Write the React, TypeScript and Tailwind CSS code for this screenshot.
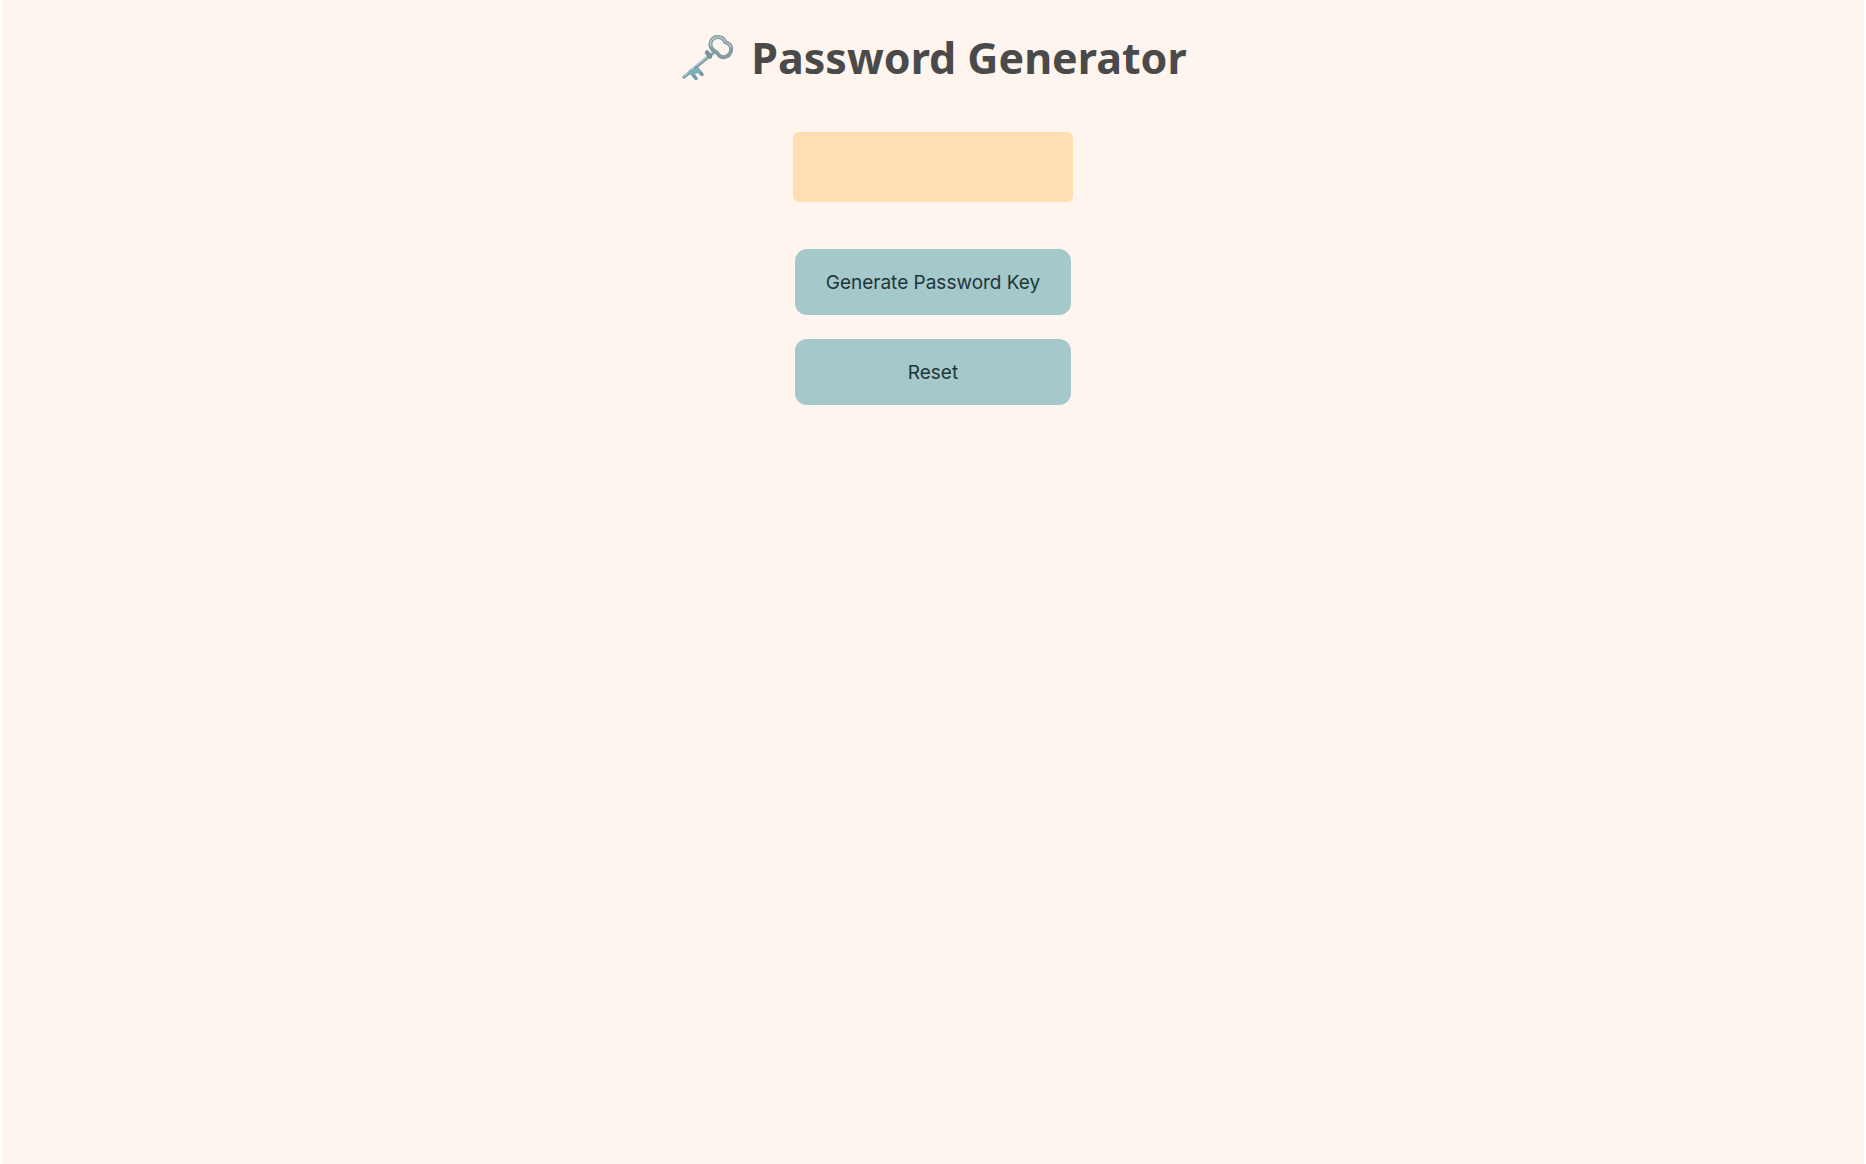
import { useState } from 'react';

const CHARS =
  'ABCDEFGHIJKLMNOPQRSTUVWXYZabcdefghijklmnopqrstuvwxyz0123456789!@#$%&*';
const LENGTH = 16;

function createPassword() {
  let result = '';
  for (let i = 0; i < LENGTH; i++) {
    result += CHARS[Math.floor(Math.random() * CHARS.length)];
  }
  return result;
}

function KeyIcon() {
  return (
    <svg className="w-14 h-14" viewBox="0 0 56 56" fill="none" aria-hidden="true">
      {/* shaft */}
      <path d="M35 22 L5 47" stroke="#7f9ba5" strokeWidth="3.5" strokeLinecap="round" />
      <path d="M34 21.5 L5 46" stroke="#b4cfd6" strokeWidth="1.3" strokeLinecap="round" />
      {/* bit */}
      <path d="M12 42 L17 48.5 M17 38 L23 44.5" stroke="#7397a5" strokeWidth="3.5" strokeLinecap="round" />
      <path d="M12 42.5 L19 40.5" stroke="#7fb0c0" strokeWidth="5" strokeLinecap="round" />
      {/* collar */}
      <path d="M28 22.5 L31 26.5" stroke="#78929b" strokeWidth="4.5" strokeLinecap="round" />
      {/* bow */}
      <path
        d="M34 20 C29 15 32 7 39 7 C43 7 45 9 46 12 C50 13 53 16 52 21 C50 28 42 29 39 24 C38 22 36 22 34 20 Z"
        stroke="#849ba3"
        strokeWidth="4"
        strokeLinejoin="round"
      />
      <path
        d="M32 16 C30 12 34 7 39 7 C43 7 45 9 46 12 C49 13 51 14 52 17"
        stroke="#b4cad0"
        strokeWidth="1.3"
        strokeLinecap="round"
      />
    </svg>
  );
}

export default function App() {
  const [password, setPassword] = useState('');

  const buttonClass =
    'h-[66px] w-[276px] pt-0.5 rounded-xl bg-[#a5c8ca] font-[Inter,sans-serif] text-[19px] text-[#1d3638] cursor-pointer hover:bg-[#94babc]';

  return (
    <div className="min-h-screen bg-white px-0.5">
      <main className="min-h-screen bg-[#fef5ee] flex flex-col items-center pt-7">
        <h1 className="flex items-center gap-4 h-[60px] font-['Noto_Sans',sans-serif] text-[43px] font-bold text-[#4a4a4a]">
          <KeyIcon />
          Password Generator
        </h1>

        <output
          aria-label="Password"
          className="mt-11 flex h-[70px] w-[280px] items-center justify-center rounded-md bg-[#ffdfb2] font-[Inter,sans-serif] text-[19px] text-[#4a4a4a]"
        >
          {password}
        </output>

        <div className="mt-[47px] flex flex-col gap-6">
          <button className={buttonClass} onClick={() => setPassword(createPassword())}>
            Generate Password Key
          </button>
          <button className={buttonClass} onClick={() => setPassword('')}>
            Reset
          </button>
        </div>
      </main>
    </div>
  );
}
